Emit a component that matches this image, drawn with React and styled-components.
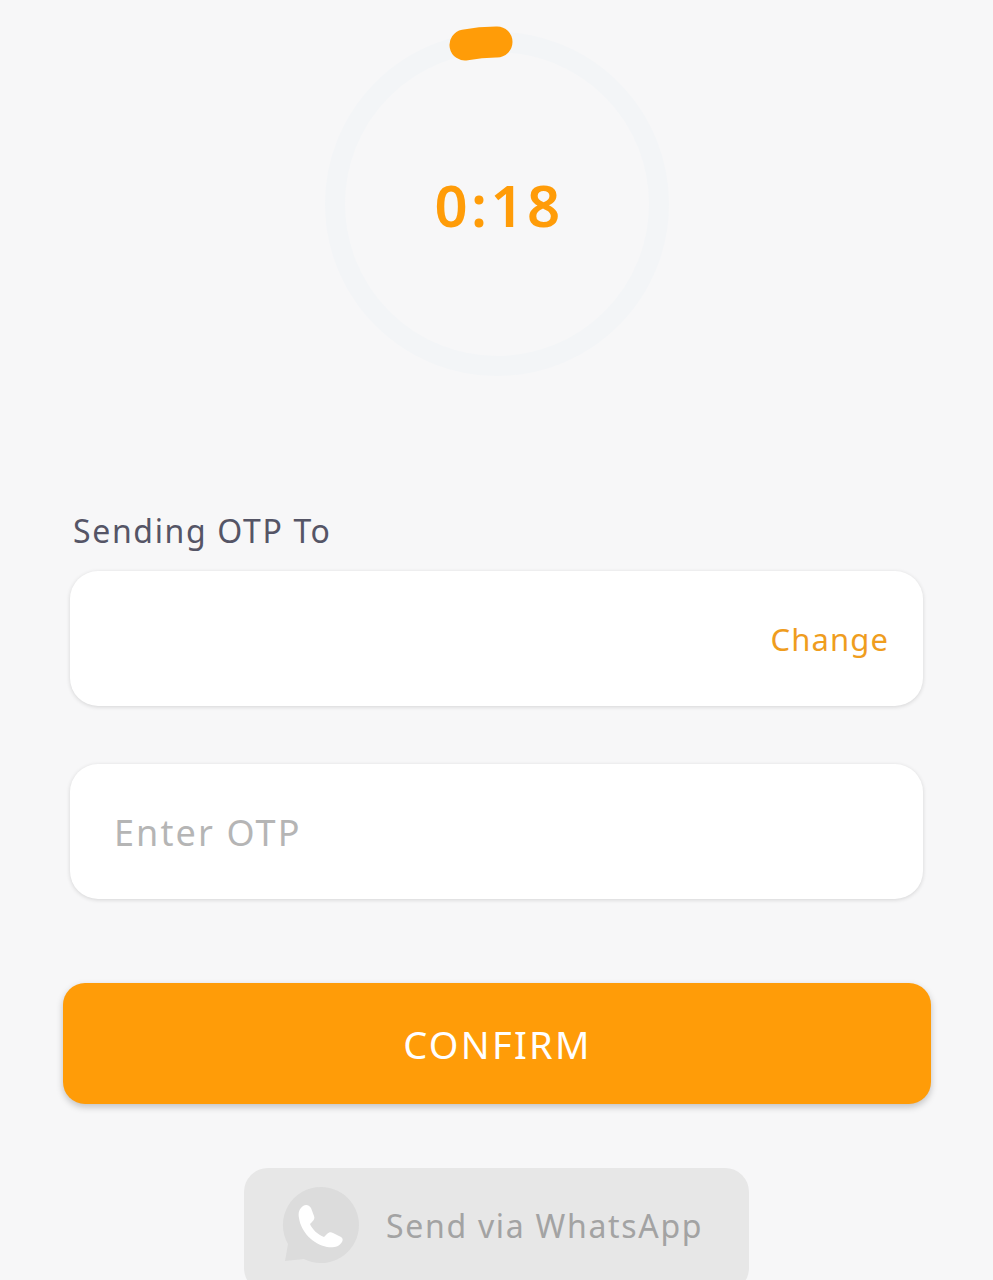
import React from 'react';
import styled, { createGlobalStyle } from 'styled-components';

const GlobalStyle = createGlobalStyle`
  html, body {
    margin: 0;
    padding: 0;
    background-color: #f7f7f8;
  }
`;

const Page = styled.div`
  width: 993px;
  height: 1280px;
  overflow: hidden;
  box-sizing: border-box;
  padding-top: 14px;
  display: flex;
  flex-direction: column;
  align-items: center;
  font-family: 'Noto Sans', sans-serif;
`;

const Timer = styled.div`
  width: 380px;
  height: 380px;
  display: grid;
  place-items: center;

  svg, span {
    grid-area: 1 / 1;
  }
`;

const TimerText = styled.span`
  font-size: 58px;
  font-weight: 600;
  color: #ff9c08;
  letter-spacing: 3.4px;
  margin-left: 5px;
`;

const Form = styled.div`
  width: 853px;
  margin-top: 115px;
  display: flex;
  flex-direction: column;
`;

const Label = styled.div`
  font-size: 32px;
  line-height: 44px;
  color: #555566;
  letter-spacing: 1.65px;
  padding-left: 3px;
  margin-bottom: 18px;
`;

const Field = styled.div`
  height: 135px;
  box-sizing: border-box;
  background-color: #fff;
  border-radius: 28px;
  box-shadow: 0 1px 4px rgba(0, 0, 0, 0.14);
  display: flex;
  align-items: center;
  justify-content: ${(props) => (props.$end ? 'flex-end' : 'flex-start')};
  padding: 0 34px 0 44px;
  margin-bottom: 58px;
`;

const ChangeLink = styled.span`
  font-size: 31px;
  color: #ef9d1e;
  letter-spacing: 1.1px;
`;

const OtpInput = styled.input`
  width: 100%;
  border: 0;
  outline: 0;
  padding: 2px 0 0;
  background: transparent;
  font-family: inherit;
  font-size: 36px;
  letter-spacing: 2.1px;

  &::placeholder {
    color: #b5b5b5;
    opacity: 1;
  }
`;

const ConfirmButton = styled.button`
  width: 868px;
  height: 121px;
  flex-shrink: 0;
  margin-top: 26px;
  padding: 0 0 0 2px;
  border: 0;
  border-radius: 22px;
  background-color: #ff9c08;
  box-shadow: 0 3px 7px rgba(0, 0, 0, 0.22);
  color: #fff;
  font-family: inherit;
  font-size: 38px;
  letter-spacing: 2.3px;
`;

const WhatsappButton = styled.button`
  width: 505px;
  height: 124px;
  flex-shrink: 0;
  margin-top: 64px;
  border: 0;
  border-radius: 24px;
  background-color: #e7e7e7;
  color: #a3a3a3;
  font-family: inherit;
  font-size: 32px;
  letter-spacing: 1.7px;
  display: flex;
  align-items: center;
  gap: 21px;
  padding: 0 0 10px 37px;
  box-sizing: border-box;
`;

const WhatsappIcon = () => (
  <svg width="84" height="84" viewBox="0 0 84 84">
    <path
      d="M40 4A38 38 0 1 1 23 76L4 78L7 61A38 38 0 0 1 40 4Z"
      fill="#dcdcdc"
    />
    <path
      d="M22 23C25 21 28 22 30 25L33 33C34 35 33 37 31 39L29 41C31 46 37 52 43 54L46 51C48 49 50 49 52 50L60 54C62 55 62 57 61 59C58 64 52 65 46 64C32 61 20 49 18 35C17 30 18 26 22 23Z"
      fill="#fff"
    />
  </svg>
);

const App = () => {
  return (
    <Page>
      <GlobalStyle />
      <Timer>
        <svg width="380" height="380" viewBox="0 0 380 380">
          <circle cx="190" cy="190" r="162" fill="none" stroke="#f3f5f7" strokeWidth="20" />
          <path
            d="M158 31A162 162 0 0 1 190 28"
            fill="none"
            stroke="#ff9c08"
            strokeWidth="31"
            strokeLinecap="round"
          />
        </svg>
        <TimerText>0:18</TimerText>
      </Timer>
      <Form>
        <Label>Sending OTP To</Label>
        <Field $end>
          <ChangeLink>Change</ChangeLink>
        </Field>
        <Field>
          <OtpInput placeholder="Enter OTP" />
        </Field>
      </Form>
      <ConfirmButton>CONFIRM</ConfirmButton>
      <WhatsappButton>
        <WhatsappIcon />
        Send via WhatsApp
      </WhatsappButton>
    </Page>
  );
};

export default App;
